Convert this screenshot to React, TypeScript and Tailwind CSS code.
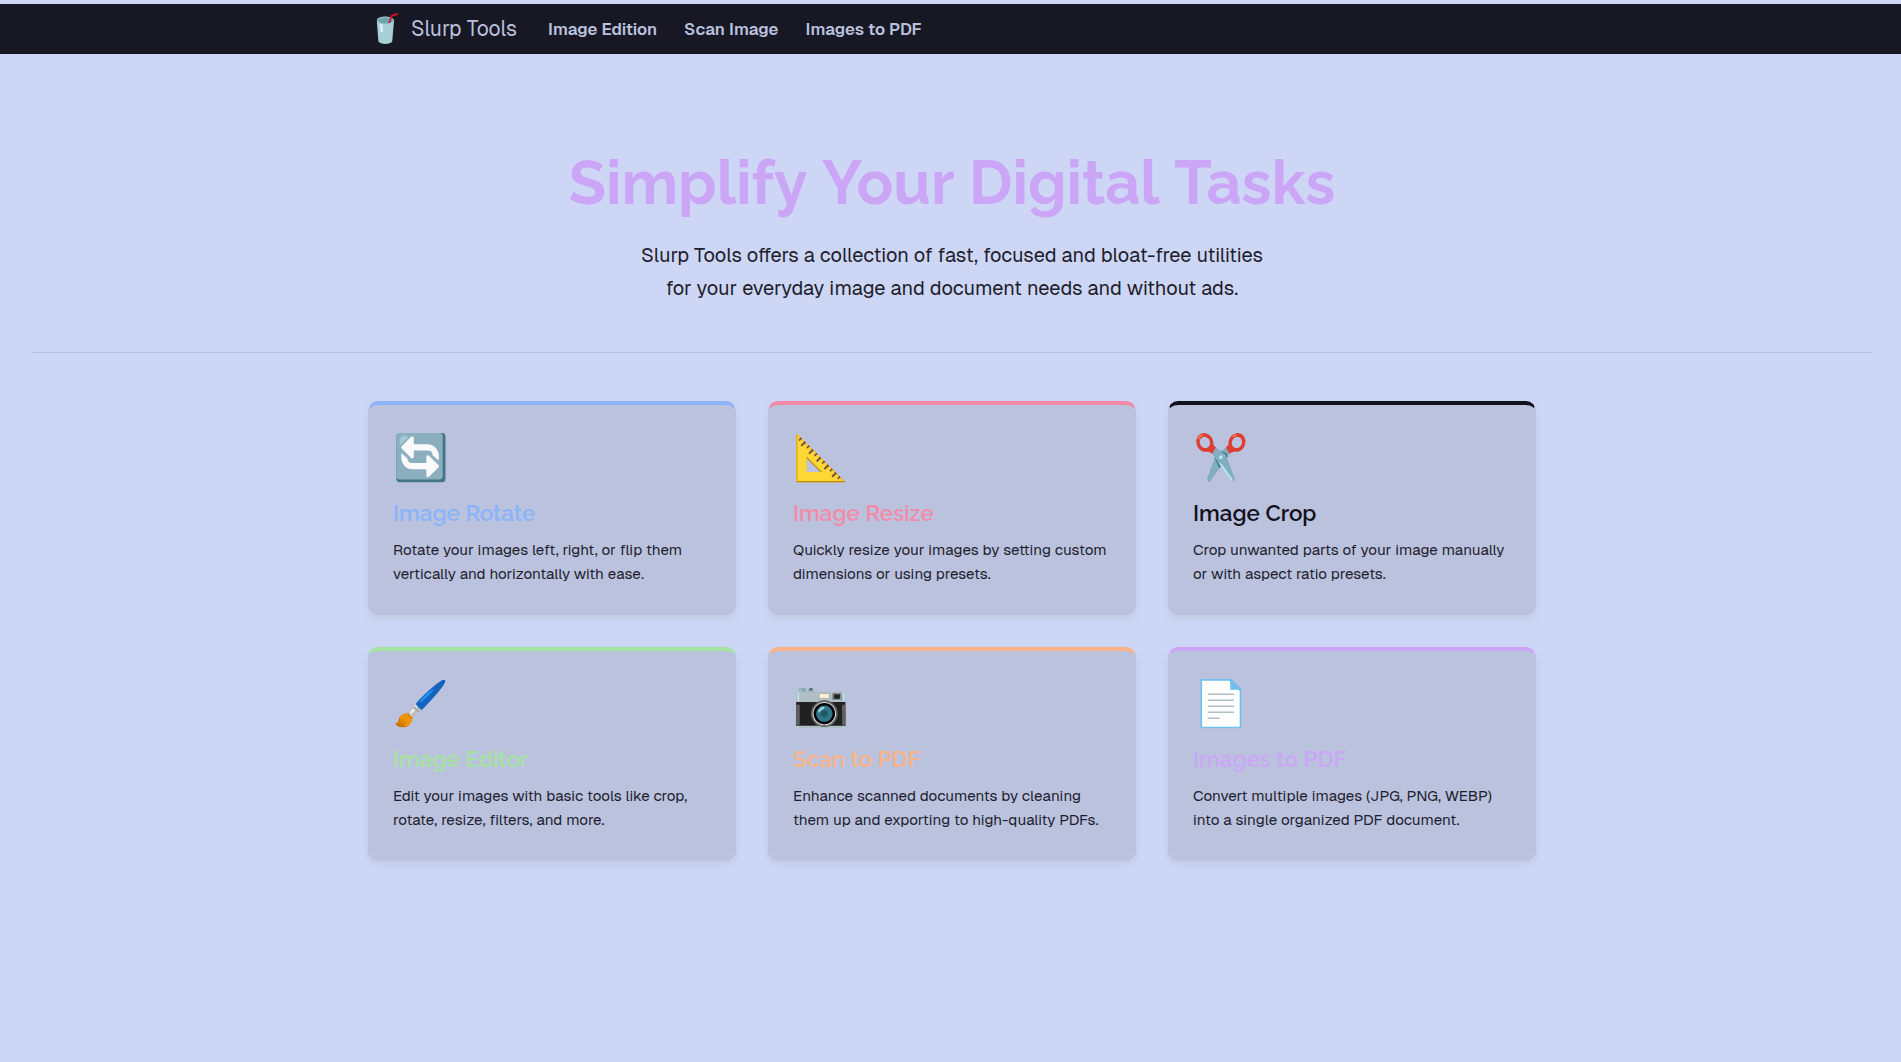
const cards = [
  { icon: '🔄', title: 'Image Rotate', border: 'border-t-[#89b4fa]', color: 'text-[#89b4fa]', lines: ['Rotate your images left, right, or flip them', 'vertically and horizontally with ease.'] },
  { icon: '📐', title: 'Image Resize', border: 'border-t-[#f38ba8]', color: 'text-[#f38ba8]', lines: ['Quickly resize your images by setting custom', 'dimensions or using presets.'] },
  { icon: '✂️', title: 'Image Crop', border: 'border-t-[#11111b]', color: 'text-[#11111b]', lines: ['Crop unwanted parts of your image manually', 'or with aspect ratio presets.'] },
  { icon: '🖌️', title: 'Image Editor', border: 'border-t-[#a6e3a1]', color: 'text-[#a6e3a1]', lines: ['Edit your images with basic tools like crop,', 'rotate, resize, filters, and more.'] },
  { icon: '📷', title: 'Scan to PDF', border: 'border-t-[#fab387]', color: 'text-[#fab387]', lines: ['Enhance scanned documents by cleaning', 'them up and exporting to high-quality PDFs.'] },
  { icon: '📄', title: 'Images to PDF', border: 'border-t-[#cba6f7]', color: 'text-[#cba6f7]', lines: ['Convert multiple images (JPG, PNG, WEBP)', 'into a single organized PDF document.'] },
];

export default function App() {
  return (
    <div className="w-full min-h-screen overflow-hidden bg-[#cdd6f4] font-['Geist',sans-serif] text-[#1e1e2e]">
      <div className="w-[1904px] pt-1">
        <nav className="h-[50px] border-b border-[#11111b] bg-[#181825] text-[#bac2de]">
          <div className="mx-auto flex h-full w-[1168px] items-center">
            <span className="w-[43px] font-['Noto_Color_Emoji'] text-[28px] leading-none">🥤</span>
            <span className="w-[137px] text-[21px]">Slurp Tools</span>
            <div className="flex gap-[27px] pt-0.5 text-[16.8px] font-semibold">
              <a>Image Edition</a>
              <a>Scan Image</a>
              <a>Images to PDF</a>
            </div>
          </div>
        </nav>
        <header className="mx-8 flex h-[299px] flex-col items-center border-b border-[#bac2de] pt-[92px] text-center">
          <h1 className="font-['Raleway',sans-serif] text-[60.8px] font-bold leading-[73px] text-[#cba6f7]">
            <span className="inline-block">Simplify</span> <span className="inline-block">Your</span> <span className="inline-block">Digital</span> <span className="inline-block">Tasks</span>
          </h1>
          <p className="mt-5 text-[20px] leading-[33px]">
            Slurp Tools offers a collection of fast, focused and bloat-free utilities
            <br />
            for your everyday image and document needs and without ads.
          </p>
        </header>
        <main className="mx-auto mt-12 grid w-[1168px] grid-cols-3 gap-8">
          {cards.map((c) => (
            <article key={c.title} className={`h-[214px] rounded-[10px] border border-t-4 border-[#bac2de] bg-[#bac2de] px-6 pt-6 shadow-[0_4px_8px_rgba(0,0,0,0.06)] ${c.border}`}>
              <div className="h-[58px] pt-px font-['Noto_Color_Emoji'] text-[44.8px] leading-[56px]">{c.icon}</div>
              <h2 className={`mt-[13px] font-['Raleway',sans-serif] text-[22.4px] font-semibold leading-[27px] ${c.color}`}>{c.title}</h2>
              <p className="mt-[11px] whitespace-nowrap text-[15.2px] leading-[24.32px]">
                {c.lines[0]}
                <br />
                {c.lines[1]}
              </p>
            </article>
          ))}
        </main>
      </div>
    </div>
  );
}
